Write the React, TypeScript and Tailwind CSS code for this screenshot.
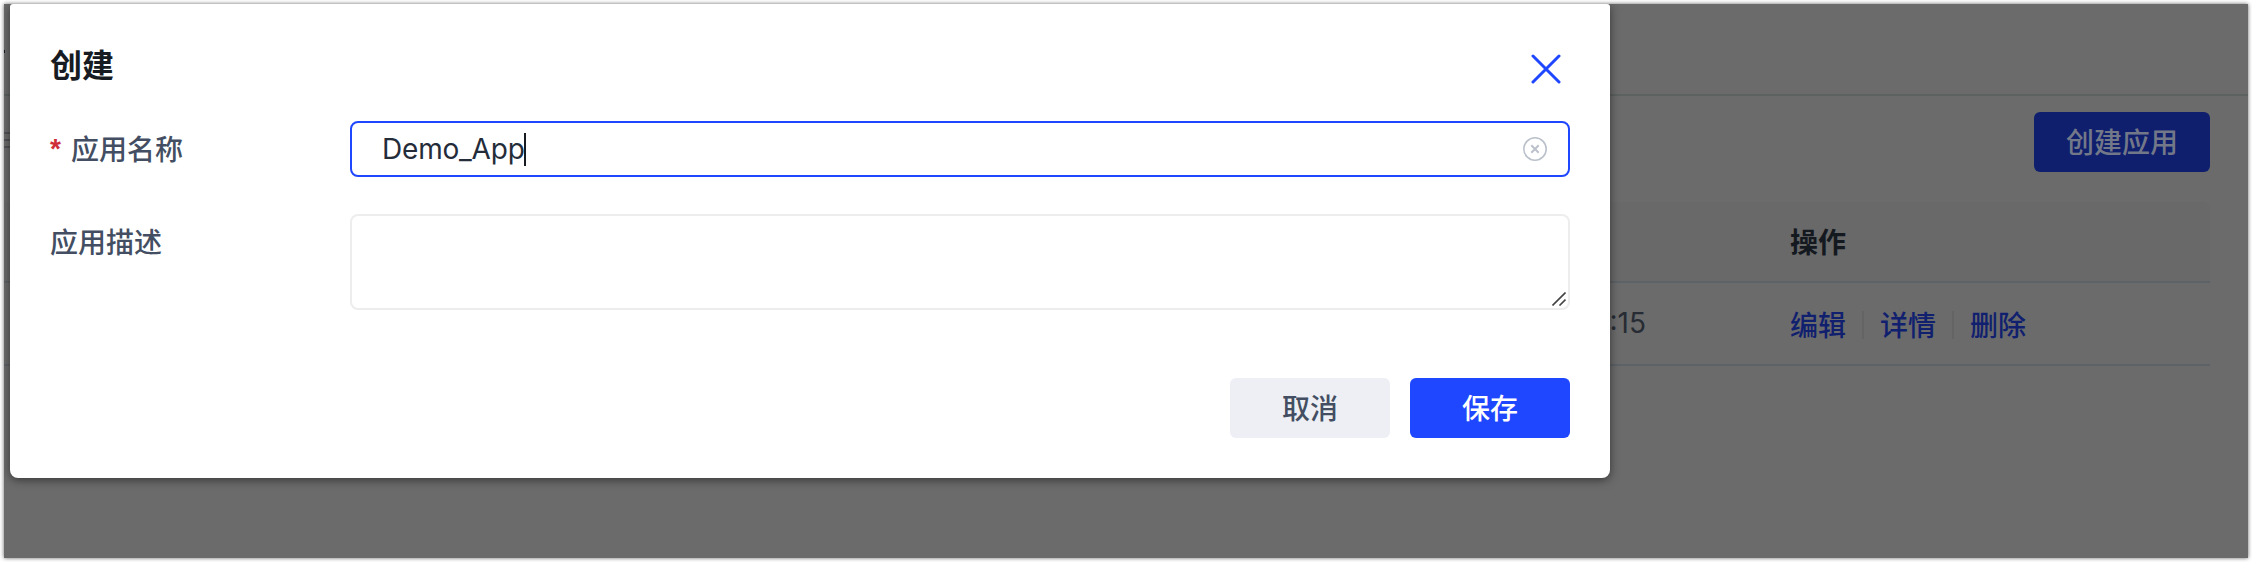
import type { ReactNode } from "react";

function Caption({ children }: { children: ReactNode }) {
  return <span className="pt-0.5 text-[28px] leading-[40px] whitespace-nowrap">{children}</span>;
}

function Page() {
  return (
    <div className="flex h-full w-full flex-col bg-[#6b6b6b]">
      <header className="flex h-[92px] shrink-0 items-center border-b-2 border-[#5c6260]">
        <span className="mt-1 h-[3px] w-px bg-[#171b22]" />
      </header>
      <main className="flex flex-col pt-4">
        <div className="flex h-[60px] items-start justify-between pr-[38px]">
          <svg className="mt-5 h-4 w-6" viewBox="0 0 24 16" fill="none" stroke="#505257" strokeWidth="2">
            <path d="M0 1h24M0 8h24M0 15h24" />
          </svg>
          <button className="flex h-[60px] w-[176px] items-center justify-center rounded-md bg-[#0f1f6e] text-[#737889]">
            <Caption>创建应用</Caption>
          </button>
        </div>
        <div className="mt-[30px] mr-[38px] flex h-[81px] items-center rounded-tr-lg border-b-2 border-[#5d6266] bg-[#696969] pl-[1786px] font-bold text-[#14181f]">
          <Caption>操作</Caption>
        </div>
        <div className="mr-[38px] flex h-[83px] items-center border-b-2 border-[#5d6266]">
          <div className="flex w-[1642px] shrink-0 justify-end pb-[3px] font-normal text-[#272b34]">
            <Caption>10:28:15</Caption>
          </div>
          <div className="ml-[144px] flex items-center pt-0.5 text-[#10206f]">
            <Caption>编辑</Caption>
            <span className="mx-4 h-7 w-0.5 bg-[#646464]" />
            <Caption>详情</Caption>
            <span className="mx-4 h-7 w-0.5 bg-[#646464]" />
            <Caption>删除</Caption>
          </div>
        </div>
      </main>
    </div>
  );
}

function Dialog() {
  return (
    <section className="absolute left-1.5 top-0 flex h-[474px] w-[1600px] flex-col rounded-t-[3px] rounded-b-lg bg-white px-10 shadow-[0_2px_10px_rgba(0,0,0,0.5)]">
      <div className="mt-[37px] flex h-12 items-center justify-between">
        <h2 className="pt-0.5 text-[32px] leading-[48px] font-bold text-[#171b22]">创建</h2>
        <svg className="mt-2 mr-[9px] size-[30px]" viewBox="0 0 30 30" fill="none" stroke="#1f47ff" strokeWidth="3" strokeLinecap="round">
          <path d="M2 2 28 28M28 2 2 28" />
        </svg>
      </div>
      <div className="mt-8 flex h-14 items-center text-[#434e62]">
        <div className="flex w-[300px] items-center">
          <span className="mr-2 flex w-[13px] font-['Liberation_Sans',sans-serif] text-[28px] leading-[40px] font-bold text-[#cf3038]">*</span>
          <Caption>应用名称</Caption>
        </div>
        <div className="flex h-14 flex-1 items-center justify-between rounded-lg border-2 border-[#1f47ff] pl-[30px] pr-[21px] text-[#242c3a]">
          <div className="flex items-center">
            <span className="w-[142px] text-[28px] leading-[40px] font-normal tracking-[-0.2px] whitespace-nowrap">Demo_App</span>
            <span className="h-[33px] w-0.5 bg-[#171b22]" />
          </div>
          <svg className="size-[24px]" viewBox="0 0 24 24" fill="none" stroke="#bbc1cb" strokeWidth="1.6">
            <circle cx="12" cy="12" r="11.2" />
            <path d="M8.3 8.3l7.4 7.4M15.7 8.3l-7.4 7.4" strokeWidth="2" />
          </svg>
        </div>
      </div>
      <div className="mt-[37px] flex h-24 text-[#434e62]">
        <div className="flex w-[300px] items-start pt-[7px]">
          <Caption>应用描述</Caption>
        </div>
        <div className="flex flex-1 items-end justify-end rounded-lg border-2 border-[#ededed] pr-0.5 pb-0.5">
          <svg className="size-[14px]" viewBox="0 0 14 14" fill="none" stroke="#444" strokeWidth="1.6">
            <path d="M.5 13.5 13.5 .5M7.5 13.5l6-6" />
          </svg>
        </div>
      </div>
      <div className="mt-[68px] flex justify-end gap-5">
        <button className="flex h-[60px] w-40 items-center justify-center rounded-md bg-[#eeeff4] text-[#434e62]">
          <Caption>取消</Caption>
        </button>
        <button className="flex h-[60px] w-40 items-center justify-center rounded-md bg-[#1f47ff] text-white">
          <Caption>保存</Caption>
        </button>
      </div>
    </section>
  );
}

export default function App() {
  return (
    <div className="h-[562px] w-[2252px] overflow-hidden bg-white p-1 font-['Inter','Noto_Sans_CJK_SC',sans-serif] font-medium">
      <div className="relative h-[554px] w-[2244px] shadow-[0_0_4px_rgba(0,0,0,0.6)]">
        <div className="relative h-full w-full overflow-hidden">
          <Page />
          <Dialog />
        </div>
      </div>
    </div>
  );
}
